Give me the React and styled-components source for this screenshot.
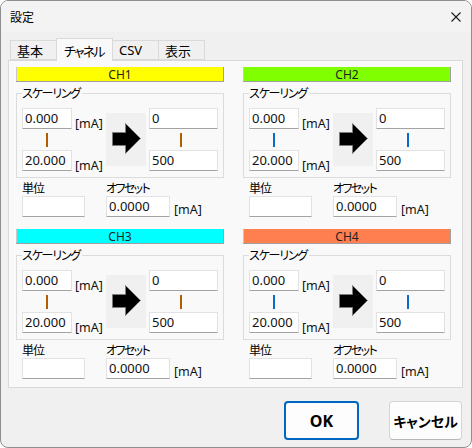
import React from 'react';
import styled, { createGlobalStyle } from 'styled-components';

const Global = createGlobalStyle`
  html, body { margin: 0; padding: 0; background: #ffffff; }
  body { font-family: "Noto Sans", "Noto Sans CJK JP", sans-serif; }
  #root { width: 472px; height: 448px; }
`;

const FONT = `"Noto Sans", "Noto Sans CJK JP", sans-serif`;
const JP = `"Noto Sans CJK JP", sans-serif`;

const Window = styled.div`
  width: 472px;
  height: 448px;
  box-sizing: border-box;
  border: 1px solid #8e8e8e;
  border-radius: 8px;
  background: #f0f0f0;
  overflow: hidden;
  display: flex;
  flex-direction: column;
  font-family: ${FONT};
  font-size: 12px;
  color: #000;
  font-feature-settings: "palt";
`;

const TitleBar = styled.div`
  height: 31px;
  flex: none;
  display: flex;
  align-items: center;
  justify-content: space-between;
  padding: 0 10px 0 9px;
  background: #f3f3f3;
`;

const Title = styled.span`
  font-size: 12px;
  line-height: 14px;
  font-family: ${JP};
`;

const CloseIcon = styled.svg`
  width: 10px;
  height: 10px;
  display: block;
  margin-top: 1px;
`;

const TabStrip = styled.div`
  margin-top: 6px;
  height: 22px;
  flex: none;
  display: flex;
  align-items: flex-end;
  padding-left: 9px;
  position: relative;
  z-index: 1;
`;

const Tab = styled.div`
  box-sizing: border-box;
  width: ${p => p.$w}px;
  height: ${p => (p.$active ? 23 : 20)}px;
  margin-bottom: ${p => (p.$active ? -1 : 0)}px;
  padding-left: ${p => (p.$active ? 7 : 6)}px;
  display: flex;
  align-items: center;
  font-size: 13px;
  letter-spacing: ${p => p.$ls || 0}px;
  font-family: ${FONT};
  background: ${p => (p.$active ? '#f9f9f9' : '#f0f0f0')};
  border: 1px solid #d9d9d9;
  border-bottom: ${p => (p.$active ? 'none' : '1px solid #d9d9d9')};
  margin-left: -1px;
  &:first-child { margin-left: 0; }
`;

const Panel = styled.div`
  margin: 0 8px 0 7px;
  height: 328px;
  box-sizing: border-box;
  flex: none;
  background: #f9f9f9;
  border: 1px solid #d9d9d9;
  padding: 6px 0 0 7px;
  display: grid;
  grid-template-columns: 208px 208px;
  column-gap: 19px;
  row-gap: 12px;
  align-content: start;
`;

const Channel = styled.div`
  display: flex;
  flex-direction: column;
`;

const Header = styled.div`
  height: 15px;
  line-height: 15px;
  text-align: center;
  font-size: 12px;
  color: #222;
  background: ${p => p.$color};
  box-shadow: inset -1px -1px 0 #a0a0a0, inset 1px 0 0 #c8c8c8;
`;

const Group = styled.fieldset`
  margin: 4px 0 0 0;
  padding: 8px 5px 6px 5px;
  border: 1px solid #dcdcdc;
  min-width: 0;
  display: flex;
  align-items: center;
`;

const Legend = styled.legend`
  padding: 0 2px 0 0;
  font-size: 12px;
  line-height: 14px;
  letter-spacing: -1.2px;
  font-family: ${JP};
`;

const Stack = styled.div`
  display: grid;
  grid-template-rows: 21px 21px 21px;
  width: ${p => p.$w}px;
  margin-left: ${p => p.$ml || 0}px;
`;

const Field = styled.div`
  box-sizing: border-box;
  height: 21px;
  width: ${p => (p.$w ? `${p.$w}px` : 'auto')};
  background: #ffffff;
  border: 1px solid #e2e2e2;
  border-bottom-color: #a3a3a3;
  border-radius: 1px;
  padding: 0 2px;
  font-size: 13px;
  line-height: 19px;
  color: #111;
  grid-column: ${p => p.$col || 'auto'};
  grid-row: ${p => p.$row || 'auto'};
`;

const Bar = styled.div`
  width: 2px;
  height: 14px;
  margin-top: 4px;
  background: ${p => p.$color};
  justify-self: ${p => (p.$x ? 'start' : 'center')};
  margin-left: ${p => p.$x || 0}px;
`;

const Unit = styled.div`
  padding-left: 3px;
  font-size: 12.5px;
  line-height: 14px;
  align-self: end;
  margin-bottom: -2px;
  color: #111;
`;

const ArrowBox = styled.div`
  width: 40px;
  height: 53px;
  background: #f0f0f0;
  display: flex;
  align-items: center;
  justify-content: center;
`;

const ArrowSvg = styled.svg`
  width: 40px;
  height: 53px;
  display: block;
`;

const Bottom = styled.div`
  margin-top: 3px;
  padding-left: 6px;
  display: grid;
  grid-template-columns: 84px 64px auto;
  grid-template-rows: 14px 21px;
  row-gap: 1px;
  align-items: start;
`;

const SmallLabel = styled.div`
  font-size: 12px;
  line-height: 14px;
  letter-spacing: ${p => p.$ls}px;
  font-family: ${JP};
  grid-column: ${p => p.$col};
  grid-row: 1;
`;

const BottomUnit = styled.div`
  grid-column: 3;
  grid-row: 2;
  padding-left: 4px;
  font-size: 12.5px;
  line-height: 14px;
  margin-top: 7px;
  color: #111;
`;

const Footer = styled.div`
  flex: 1;
  display: flex;
  justify-content: flex-end;
  align-items: flex-start;
  padding: 13px 9px 0 0;
  gap: 30px;
`;

const Button = styled.button`
  box-sizing: border-box;
  height: 39px;
  width: ${p => p.$w}px;
  border-radius: 4px;
  background: #fdfdfd;
  border: ${p => (p.$primary ? '2px solid #0067c0' : '1px solid #d4d4d4')};
  border-bottom-color: ${p => (p.$primary ? '#0067c0' : '#b8b8b8')};
  font-family: ${FONT};
  font-feature-settings: "palt";
  font-weight: 700;
  font-size: ${p => p.$fs}px;
  color: #000;
  padding: 0;
  display: flex;
  align-items: center;
  justify-content: center;
`;

const channels = [
  { name: 'CH1', color: '#ffff00', bar: '#b35c00' },
  { name: 'CH2', color: '#80ff00', bar: '#0a6cc4' },
  { name: 'CH3', color: '#00ffff', bar: '#b35c00' },
  { name: 'CH4', color: '#ff7f50', bar: '#0a6cc4' },
];

function Arrow() {
  return (
    <ArrowSvg viewBox="0 0 40 53">
      <polygon
        points="6.5,19.5 19.5,19.5 19.5,10.5 34.5,25.5 19.5,40.5 19.5,32.5 6.5,32.5"
        fill="#000"
        stroke="#7c7c7c"
        strokeWidth="1"
      />
    </ArrowSvg>
  );
}

function ChannelBlock({ ch }) {
  return (
    <Channel>
      <Header $color={ch.color}>{ch.name}</Header>
      <Group>
        <Legend>スケーリング</Legend>
        <Stack $w={50}>
          <Field>0.000</Field>
          <Bar $color={ch.bar} />
          <Field>20.000</Field>
        </Stack>
        <Stack $w={34}>
          <Unit>[mA]</Unit>
          <span />
          <Unit>[mA]</Unit>
        </Stack>
        <ArrowBox>
          <Arrow />
        </ArrowBox>
        <Stack $w={69} $ml={3}>
          <Field>0</Field>
          <Bar $color={ch.bar} $x={31} />
          <Field>500</Field>
        </Stack>
      </Group>
      <Bottom>
        <SmallLabel $col={1} $ls={-1}>単位</SmallLabel>
        <SmallLabel $col={2} $ls={-1.6}>オフセット</SmallLabel>
        <Field $w={63} $col={1} $row={2} />
        <Field $w={64} $col={2} $row={2}>0.0000</Field>
        <BottomUnit>[mA]</BottomUnit>
      </Bottom>
    </Channel>
  );
}

export default function App() {
  return (
    <>
      <Global />
      <Window>
        <TitleBar>
          <Title>設定</Title>
          <CloseIcon viewBox="0 0 10 10">
            <path d="M0.5 0.5 L9.5 9.5 M9.5 0.5 L0.5 9.5" stroke="#1a1a1a" strokeWidth="1.1" fill="none" />
          </CloseIcon>
        </TitleBar>
        <TabStrip>
          <Tab $w={47}>基本</Tab>
          <Tab $w={57} $active $ls={-1.8}>チャネル</Tab>
          <Tab $w={47}>CSV</Tab>
          <Tab $w={47}>表示</Tab>
        </TabStrip>
        <Panel>
          {channels.map(ch => (
            <ChannelBlock key={ch.name} ch={ch} />
          ))}
        </Panel>
        <Footer>
          <Button $primary $w={75} $fs={16}>OK</Button>
          <Button $w={73} $fs={14}>キャンセル</Button>
        </Footer>
      </Window>
    </>
  );
}
